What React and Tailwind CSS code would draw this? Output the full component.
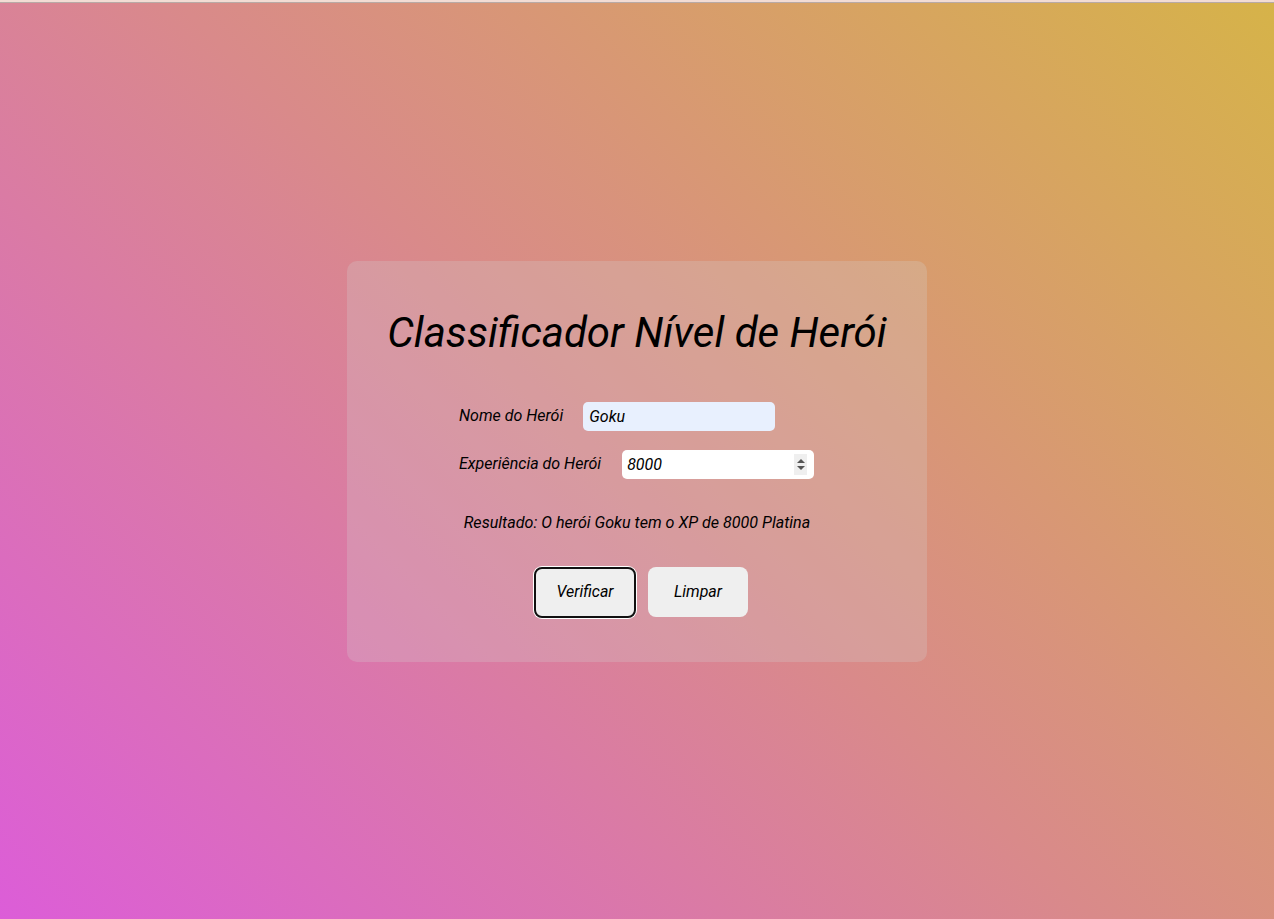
import React from "react";

export default function App() {
  return (
    <div className="min-h-screen flex flex-col italic" style={{ fontFamily: "Roboto, 'Liberation Sans', sans-serif" }}>
      <div className="h-[2px] bg-[#f2dcd4]" />
      <div className="h-px bg-[#b8aaa6]" />
      <div className="flex-1 h-[916px] flex items-center justify-center bg-[linear-gradient(45deg,#dc5dd8,#d98a8a,#d6b349)]">
        <div className="w-[580px] rounded-[10px] bg-[rgba(211,211,211,0.25)] pt-[47px] pb-[44px] flex flex-col items-center">
          <h1 className="text-[42px] leading-[49px] text-black font-normal">Classificador Nível de Herói</h1>
          <div className="mt-[45px] w-[356px] flex flex-col gap-[19px] text-base text-black">
            <div className="flex items-center h-[29px]">
              <label className="mr-[20px] whitespace-nowrap shrink-0">Nome do Herói</label>
              <input
                type="text"
                defaultValue="Goku"
                className="w-[192px] h-[29px] shrink-0 rounded-[5px] bg-[#e8f0fe] px-[6px] italic text-black outline-none"
              />
            </div>
            <div className="flex items-center h-[29px]">
              <label className="mr-[21px] whitespace-nowrap shrink-0">Experiência do Herói</label>
              <div className="relative w-[192px] h-[29px] shrink-0">
                <input
                  type="number"
                  defaultValue="8000"
                  className="w-full h-full rounded-[5px] bg-white px-[5px] italic text-black outline-none [appearance:textfield] [&::-webkit-inner-spin-button]:appearance-none [&::-webkit-outer-spin-button]:appearance-none"
                />
                <div className="absolute right-[7px] top-[4px] w-[13px] h-[21px] bg-[#efefef] flex flex-col items-center justify-center gap-[3px] pointer-events-none">
                  <svg width="8" height="4" viewBox="0 0 8 4"><path d="M4 0L8 4H0z" fill="#555" /></svg>
                  <svg width="8" height="4" viewBox="0 0 8 4"><path d="M0 0h8L4 4z" fill="#555" /></svg>
                </div>
              </div>
            </div>
          </div>
          <p className="mt-[34px] text-[16.1px] leading-[19px] text-black">Resultado: O herói Goku tem o XP de 8000 Platina</p>
          <div className="mt-[35px] ml-2 flex items-start gap-3">
            <button className="w-[102px] h-[51px] rounded-lg bg-[#efefef] border-2 border-[#111] shadow-[0_0_0_1px_white] italic text-base text-black">
              Verificar
            </button>
            <button className="w-[100px] h-[50px] rounded-lg bg-[#efefef] italic text-base text-black">
              Limpar
            </button>
          </div>
        </div>
      </div>
    </div>
  );
}
